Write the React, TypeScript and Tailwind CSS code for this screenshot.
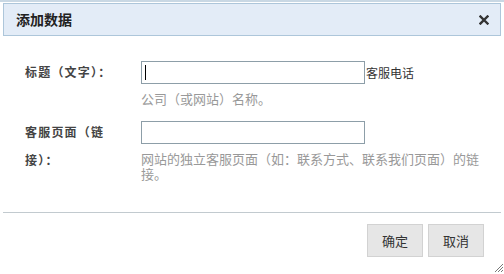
import React from "react";

const font = { fontFamily: '"Noto Sans CJK SC", "Liberation Sans", sans-serif' };

function Row({ label, hint, extra, autoFocus }: { label: string; hint: string; extra?: string; autoFocus?: boolean }) {
  return (
    <div className="flex">
      <div className="w-[141px] shrink-0 pl-[25px] pr-[20px] text-[12px] font-bold leading-[28px] tracking-[1.2px] text-[#444]">{label}</div>
      <div className="pt-[3px]">
        <div className="flex items-center">
          <div className="w-[224px] h-[23px] border border-[#8d9ea8] bg-white flex items-center pl-[3px]">
            {autoFocus && <div className="w-px h-[15px] bg-black" />}
          </div>
          {extra && <span className="text-[12px] text-[#333] leading-[23px] ml-px">{extra}</span>}
        </div>
        <p className="w-[345px] mt-[7px] text-[13px] leading-[15px] text-[#999]">{hint}</p>
      </div>
    </div>
  );
}

export default function App() {
  return (
    <div className="w-[504px] h-[274px] bg-white border-t-2 border-[#c9d8e4] relative overflow-hidden" style={font}>
      {/* Header */}
      <div className="mx-[3px] mt-px h-[33px] border border-[#adc6da] bg-[#e3ecf7] flex items-center justify-between pl-[12px] pr-[11px]">
        <h1 className="text-[14px] font-bold text-[#222]">添加数据</h1>
        <svg width="10" height="10" viewBox="0 0 10 10" className="text-[#333]">
          <path d="M1.5 1.5 L8.5 8.5 M8.5 1.5 L1.5 8.5" stroke="currentColor" strokeWidth="2.4" strokeLinecap="square" />
        </svg>
      </div>

      {/* Form */}
      <div className="pt-[22px] flex flex-col gap-[12px] h-[176px]">
        <Row label="标题（文字）：" hint="公司（或网站）名称。" extra="客服电话" autoFocus />
        <Row label="客服页面（链接）：" hint="网站的独立客服页面（如：联系方式、联系我们页面）的链接。" />
      </div>

      {/* Footer */}
      <div className="mx-[3px] border-t border-[#c2cacf]" />
      <div className="flex justify-end gap-[5px] pr-[20px] pt-[11px]">
        <button className="w-[56px] h-[33px] bg-[#e6e6e6] border border-[#d2d2d2] text-[13px] text-[#333]">确定</button>
        <button className="w-[56px] h-[33px] bg-[#e6e6e6] border border-[#d2d2d2] text-[13px] text-[#333]">取消</button>
      </div>

      {/* Resize grip */}
      <svg width="10" height="10" viewBox="0 0 10 10" className="absolute right-[1px] bottom-[2px]">
        <path d="M2 10 L10 2 M5 10 L10 5 M8 10 L10 8" stroke="#555" strokeWidth="0.8" />
      </svg>
    </div>
  );
}
